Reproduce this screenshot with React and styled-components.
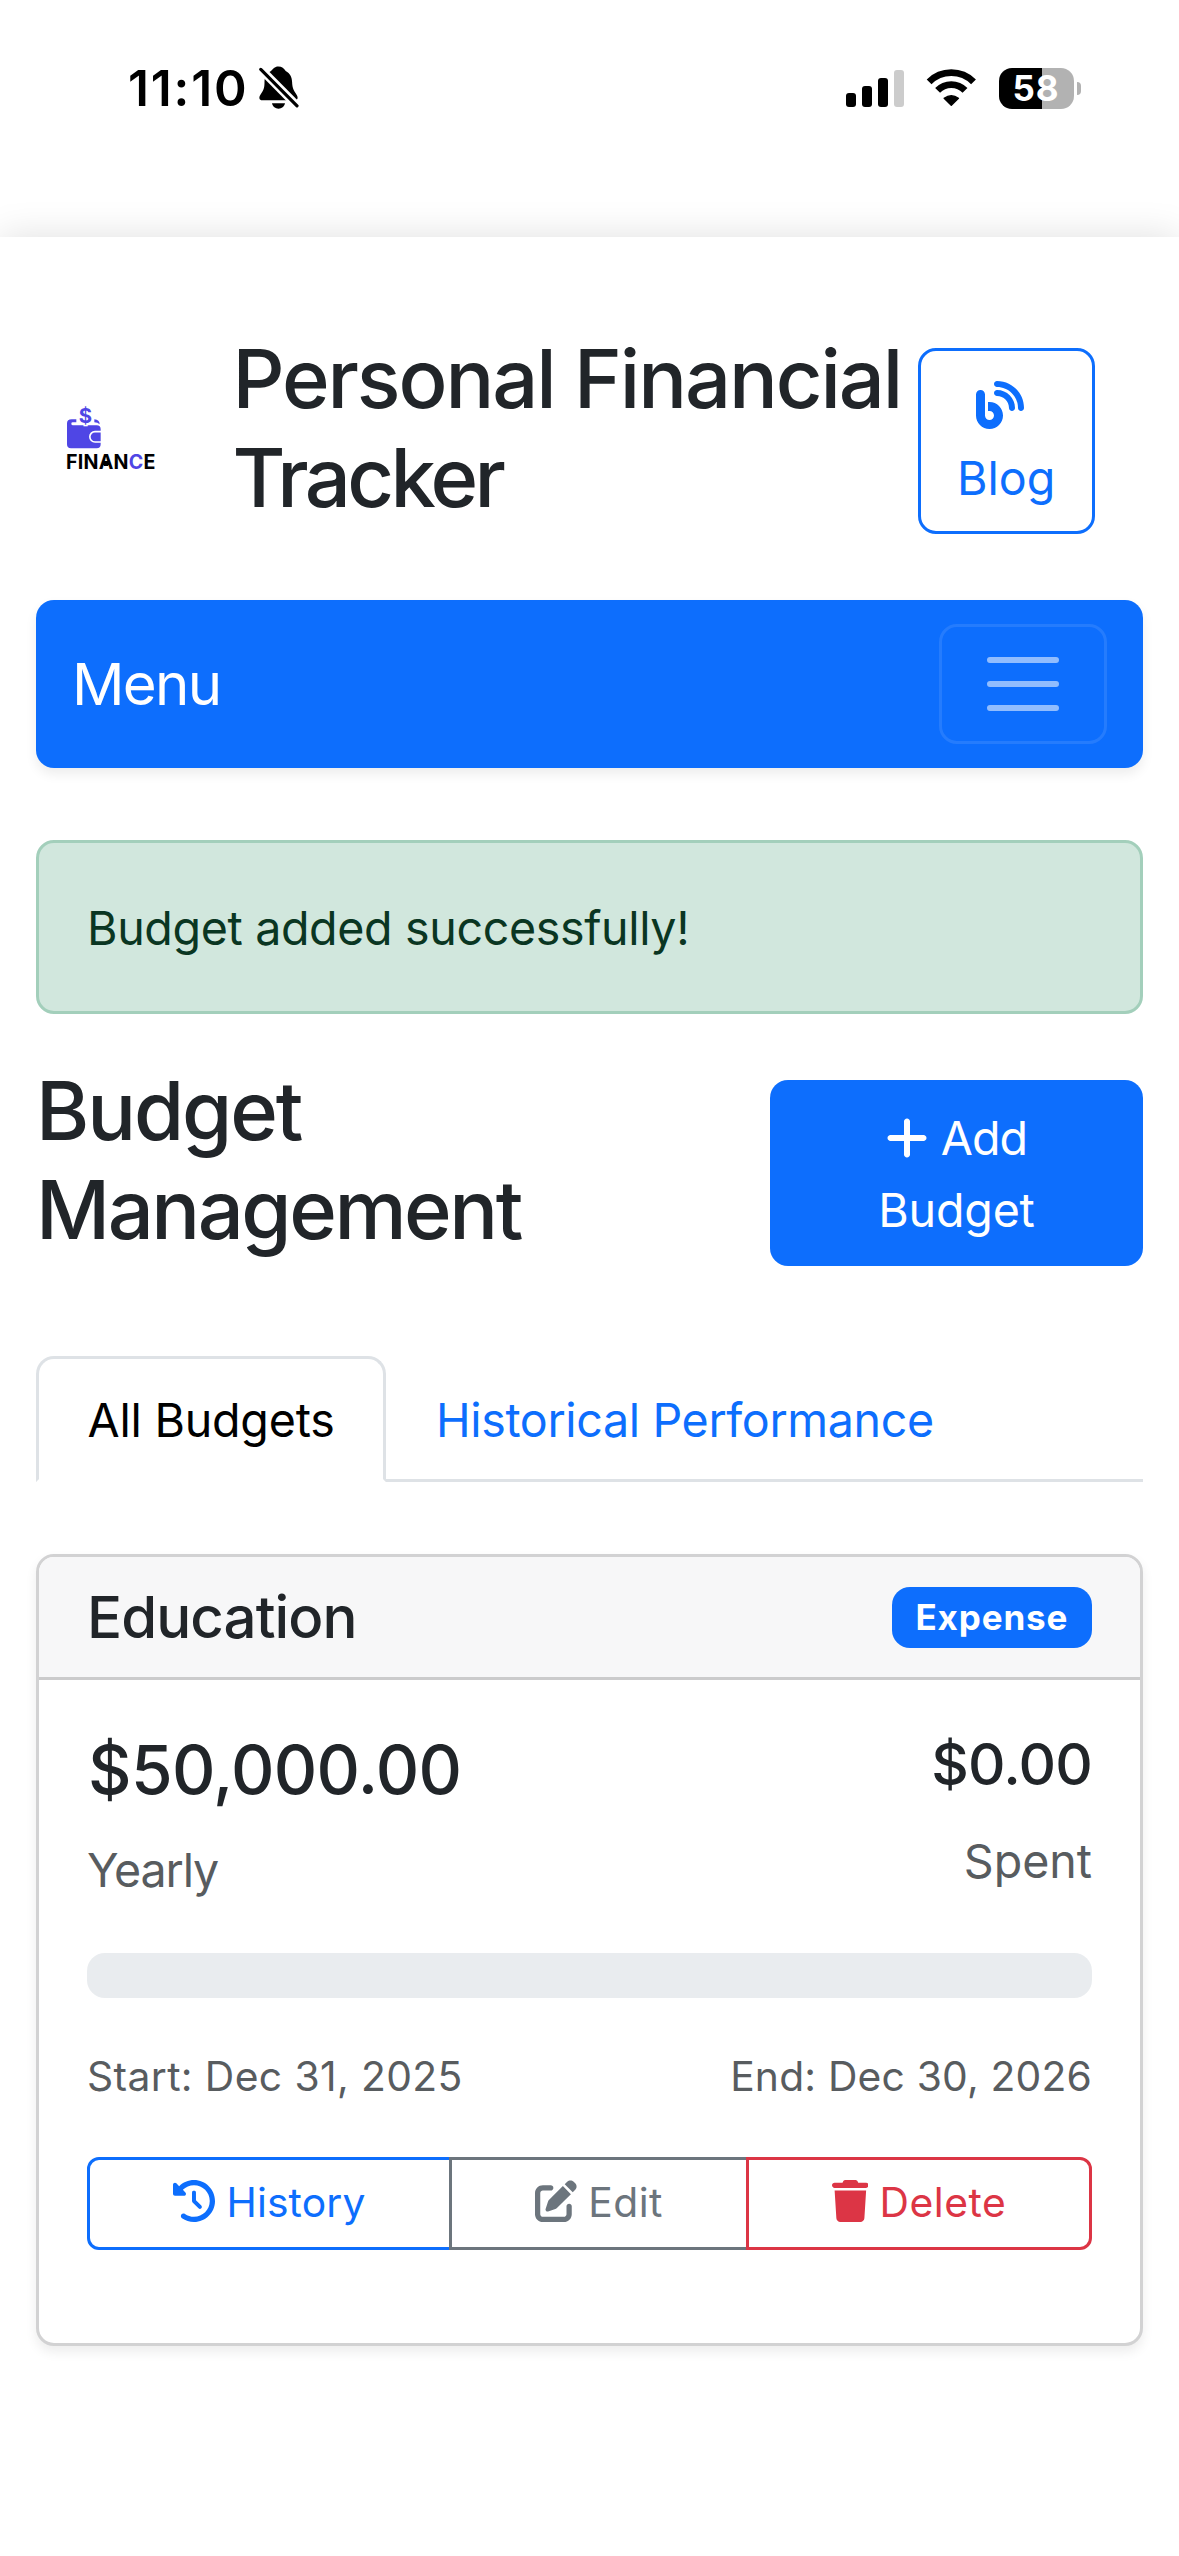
import React from "react";
import styled, { createGlobalStyle } from "styled-components";
import { FaBlog, FaClockRotateLeft, FaPenToSquare, FaPlus, FaTrash } from "react-icons/fa6";

const blue = "#0d6efd";
const ink = "#212529";

const GlobalStyle = createGlobalStyle`
  *, *::before, *::after { box-sizing: border-box; }
  body {
    margin: 0;
    background: #fff;
    color: ${ink};
    font-family: Inter, "Liberation Sans", sans-serif;
    font-size: 46.6px;
    line-height: 72px;
    overflow-x: hidden;
  }
  h1, h2, h3, h5, p { margin: 0; }
  svg { display: block; flex: none; }
`;

const Screen = styled.div`
  width: 1179px;
  height: 2556px;
  display: flex;
  flex-direction: column;
  overflow: hidden;
`;

const Spaced = styled.span`
  letter-spacing: ${(p) => p.$ls}px;
  white-space: nowrap;
`;

/* Status bar */
const StatusBar = styled.div`
  height: 237px;
  flex: none;
  display: flex;
  justify-content: space-between;
  padding: 0 98px 61px 128px;
  color: #000;
`;
const StatusGroup = styled.div`
  display: flex;
  align-items: center;
`;
const Clock = styled.span`
  font-size: 49.5px;
  font-weight: 600;
  letter-spacing: 1.86px;
  width: 130.5px;
`;
const Signal = styled.div`
  display: flex;
  align-items: flex-end;
  gap: 6px;
  height: 37px;
  margin-right: 22px;
`;
const SignalBar = styled.span`
  width: 10px;
  height: ${(p) => p.$h}px;
  border-radius: 3px;
  background: ${(p) => (p.$dim ? "#ccc" : "#000")};
`;
const Battery = styled.div`
  display: flex;
  align-items: center;
  gap: 3px;
  margin-left: 22px;
`;
const BatteryBody = styled.div`
  width: 75px;
  height: 41px;
  border-radius: 13px;
  background: linear-gradient(90deg, #000 43px, #b2b2b2 43px);
  color: #fff;
  font-size: 35px;
  line-height: 41px;
  font-weight: 700;
  letter-spacing: 0.8px;
  padding-left: 13.5px;
`;
const BatteryNub = styled.span`
  width: 4px;
  height: 13px;
  border-radius: 0 6px 6px 0;
  background: #b2b2b2;
`;

/* Page */
const Page = styled.main`
  flex: 1;
  background: #fff;
  box-shadow: 0 0 36px rgba(0, 0, 0, 0.13);
  padding: 92px 36px 0;
`;
const Header = styled.header`
  display: flex;
  align-items: center;
  justify-content: space-between;
  height: 223px;
  padding: 0 48px 0 31px;
  margin-bottom: 48px;
`;
const Logo = styled.div`
  width: 165.5px;
  flex: none;
`;
const LogoName = styled.div`
  font-size: 19.6px;
  line-height: 26px;
  font-weight: 700;
  letter-spacing: 0.25px;
  color: #000;
  margin-left: -1px;
`;
const LogoHeavy = styled.span`
  background: linear-gradient(#000, #000) center 11px / 4px 5px no-repeat;
`;
const LogoAccent = styled.span`
  color: #4f46e5;
`;
const Title = styled.h1`
  flex: 1;
  font-size: 81.2px;
  line-height: 99px;
  font-weight: 500;
  padding-bottom: ${(p) => p.$pb || 26}px;
`;
const BlogButton = styled.a`
  width: 177px;
  height: 186px;
  flex: none;
  border: 3px solid ${blue};
  border-radius: 18px;
  color: ${blue};
  padding: 19px 36px 0;
  svg {
    width: 48px;
    height: 48px;
    margin: 11px 0 13px 18.5px;
  }
`;

const MenuBar = styled.nav`
  height: 168px;
  border-radius: 18px;
  background: ${blue};
  box-shadow: 0 6px 12px rgba(0, 0, 0, 0.075);
  display: flex;
  align-items: center;
  justify-content: space-between;
  padding: 0 36px;
  color: #fff;
  font-size: 58.2px;
`;
const Toggler = styled.button`
  width: 168px;
  height: 120px;
  border: 3px solid rgba(255, 255, 255, 0.1);
  border-radius: 18px;
  background: transparent;
  display: flex;
  align-items: center;
  justify-content: center;
  padding: 0;
`;
const Alert = styled.div`
  margin-top: 72px;
  border: 3px solid #a3cfbb;
  border-radius: 18px;
  background: #d1e7dd;
  color: #0a3622;
  padding: 49px 47px 47px 48px;
`;
const Heading = styled.div`
  display: flex;
  align-items: center;
  height: 222px;
  margin: 48px 0 72px;
`;
const AddButton = styled.button`
  width: 373px;
  height: 186px;
  border: 0;
  border-radius: 18px;
  background: ${blue};
  color: #fff;
  font: inherit;
  padding: 1px 0 0;
  display: flex;
  flex-direction: column;
  align-items: center;
  justify-content: center;
`;
const AddLine = styled.span`
  display: flex;
  align-items: center;
  gap: 13px;
  svg {
    width: 42px;
    height: 48px;
  }
`;

const Tabs = styled.div`
  display: flex;
  height: 126px;
  border-bottom: 3px solid #dee2e6;
`;
const Tab = styled.a`
  height: 126px;
  padding: 25px 48px 0 ${(p) => (p.$active ? 48.5 : 47)}px;
  border: 3px solid transparent;
  color: ${blue};
  ${(p) =>
    p.$active &&
    `
    width: 350px;
    color: #000;
    background: #fff;
    border-color: #dee2e6 #dee2e6 #fff;
    border-radius: 18px 18px 0 0;
  `}
`;

const Card = styled.section`
  margin-top: 72px;
  border: 3px solid #d2d2d3;
  border-radius: 18px;
  box-shadow: 0 6px 12px rgba(0, 0, 0, 0.075);
  background: #fff;
`;
const CardHeader = styled.div`
  height: 123px;
  display: flex;
  align-items: center;
  justify-content: space-between;
  padding: 0 48px;
  background: #f7f7f8;
  border-bottom: 3px solid #cbcbcc;
  border-radius: 15px 15px 0 0;
`;
const CardTitle = styled.h5`
  font-size: 58.2px;
  line-height: 72px;
  font-weight: 500;
`;
const Badge = styled.span`
  width: 200px;
  height: 61px;
  border-radius: 18px;
  background: ${blue};
  color: #fff;
  font-size: 35px;
  line-height: 60px;
  font-weight: 700;
  letter-spacing: 0.86px;
  padding-left: 23.5px;
`;
const CardBody = styled.div`
  padding: 48px 48px 93px;
`;
const Row = styled.div`
  display: flex;
  justify-content: space-between;
`;
const Figure = styled.div`
  text-align: ${(p) => (p.$end ? "right" : "left")};
`;
const Amount = styled.h3`
  font-size: ${(p) => p.$size}px;
  line-height: ${(p) => p.$lh}px;
  font-weight: 500;
  padding: ${(p) => p.$pad || "0"};
  margin-bottom: ${(p) => p.$mb}px;
`;
const Muted = styled.p`
  color: #585c5f;
  padding-top: 1px;
  margin-bottom: -1px;
`;
const Progress = styled.div`
  height: 45px;
  margin: 48px 0 47px;
  border-radius: 18px;
  background: #e9ecef;
`;
const Dates = styled(Row)`
  color: #585c5f;
  font-size: 40.8px;
  line-height: 63px;
  margin-bottom: 49px;
`;
const ButtonGroup = styled.div`
  display: flex;
`;
const ActionButton = styled.button`
  width: ${(p) => p.$w}px;
  height: 93px;
  margin: 0 0 0 ${(p) => (p.$first ? 0 : -3)}px;
  padding: 0 0 2px;
  border: 3px solid ${(p) => p.$color};
  border-radius: ${(p) => p.$radius || "0"};
  background: #fff;
  color: ${(p) => p.$color};
  font: inherit;
  font-size: 40.8px;
  line-height: 63px;
  display: flex;
  align-items: center;
  justify-content: center;
  gap: 11px;
  svg {
    width: ${(p) => p.$icon || 42}px;
    height: 42px;
    margin-top: -3px;
  }
`;

const BellSlash = () => (
  <svg width="40" height="44" viewBox="0 0 40 44">
    <path d="M19.3 .5C15.5 .5 14 3 12 5 7.500 7.500 5.500 11 5.500 16c0 5-.5 7.500-3 11C.8 29.500 .2 31 .4 32.200.7 33.600 1.700 34.200 3.200 34.200H35.500c1.800 0 2.800-.8 3.100-2 .2-1.300-.4-2.700-2.100-5.200-2.400-3.500-3.200-6-3.400-11-.2-5-2-8.500-6.400-11C25 2.500 23 .5 19.300 .5Z" />
    <path d="M13 37.300H26C25.300 40.600 22.600 42.700 19.500 42.700S13.700 40.600 13 37.300Z" />
    <path d="M1.800 3.200 38.300 40" stroke="#fff" strokeWidth="8.400" />
    <path d="M1.800 3.400 38 39.800" stroke="#000" strokeWidth="3.200" strokeLinecap="round" />
  </svg>
);

const Wifi = () => (
  <svg width="51" height="38" viewBox="0 0 51 38" fill="none" stroke="#000">
    <path d="M3.100 12.800A31.400 31.400 0 0 1 47.500 12.800" strokeWidth="6.800" />
    <path d="M11.600 21.400A19 19 0 0 1 39 21.400" strokeWidth="6.800" />
    <path d="M25.300 36.200 18.200 29.300Q25.300 24 32.400 29.300Z" fill="#000" strokeWidth="1.500" strokeLinejoin="round" />
  </svg>
);

const WalletMark = () => (
  <svg width="34" height="42.700" viewBox="83 80 102 128" fill="#4f46e5" overflow="visible">
    <path d="M83 132Q83 120 97 120H111V129H100Q96 129 96 133Q96 138 101 138H172Q184 138 184 150V195Q184 207 172 207H95Q83 207 83 195Z" />
    <path d="M165 120Q181 121 181 135Q175 129 165 129Z" />
    <path d="M187 157H167A15.500 15.500 0 0 0 167 188H187" fill="none" stroke="#fff" strokeWidth="5" />
    <text
      x="138.500"
      y="131"
      textAnchor="middle"
      fontSize="61"
      fontWeight="700"
      fontFamily="Inter, sans-serif"
      stroke="#fff"
      strokeWidth="9"
      paintOrder="stroke"
    >
      $
    </text>
  </svg>
);

const MenuLines = () => (
  <svg width="90" height="90" viewBox="0 0 30 30">
    <path stroke="rgba(255,255,255,.55)" strokeLinecap="round" strokeWidth="2" d="M4 7h22M4 15h22M4 23h22" />
  </svg>
);

export default function App() {
  return (
    <Screen>
      <GlobalStyle />
      <StatusBar>
        <StatusGroup>
          <Clock>11:10</Clock>
          <BellSlash />
        </StatusGroup>
        <StatusGroup>
          <Signal>
            <SignalBar $h={14} />
            <SignalBar $h={21} />
            <SignalBar $h={29} />
            <SignalBar $h={37} $dim />
          </Signal>
          <Wifi />
          <Battery>
            <BatteryBody>58</BatteryBody>
            <BatteryNub />
          </Battery>
        </StatusGroup>
      </StatusBar>

      <Page>
        <Header>
          <Logo>
            <WalletMark />
            <LogoName>
              FIN<LogoHeavy>A</LogoHeavy>N<LogoAccent>C</LogoAccent>E
            </LogoName>
          </Logo>
          <Title>
            <Spaced $ls={-2.1}>Personal Financial</Spaced>
            <br />
            <Spaced $ls={-3.6}>Tracker</Spaced>
          </Title>
          <BlogButton>
            <FaBlog />
            <Spaced $ls={0}>Blog</Spaced>
          </BlogButton>
        </Header>

        <MenuBar>
          <Spaced $ls={-1.7}>Menu</Spaced>
          <Toggler aria-label="Toggle navigation">
            <MenuLines />
          </Toggler>
        </MenuBar>

        <Alert>
          <Spaced $ls={-0.36}>Budget added successfully!</Spaced>
        </Alert>

        <Heading>
          <Title as="h2">
            <Spaced $ls={-2.1}>Budget</Spaced>
            <br />
            <Spaced $ls={-2.45}>Management</Spaced>
          </Title>
          <AddButton>
            <AddLine>
              <FaPlus />
              <Spaced $ls={-0.9}>Add</Spaced>
            </AddLine>
            <Spaced $ls={-0.2}>Budget</Spaced>
          </AddButton>
        </Heading>

        <Tabs>
          <Tab $active>
            <Spaced $ls={-0.22}>All Budgets</Spaced>
          </Tab>
          <Tab>
            <Spaced $ls={-0.36}>Historical Performance</Spaced>
          </Tab>
        </Tabs>

        <Card>
          <CardHeader>
            <CardTitle>
              <Spaced $ls={-0.92}>Education</Spaced>
            </CardTitle>
            <Badge>Expense</Badge>
          </CardHeader>
          <CardBody>
            <Row>
              <Figure>
                <Amount $size={67.4} $lh={81} $mb={23} $pad="1px 0 0 1px">
                  <Spaced $ls={-0.65}>$50,000.00</Spaced>
                </Amount>
                <Muted>
                  <Spaced $ls={-1.1}>Yearly</Spaced>
                </Muted>
              </Figure>
              <Figure $end>
                <Amount $size={58.2} $lh={72} $mb={24}>
                  <Spaced $ls={-0.8}>$0.00</Spaced>
                </Amount>
                <Muted>
                  <Spaced $ls={-0.03}>Spent</Spaced>
                </Muted>
              </Figure>
            </Row>
            <Progress />
            <Dates>
              <Spaced $ls={0.38}>Start: Dec 31, 2025</Spaced>
              <Spaced $ls={0.18}>End: Dec 30, 2026</Spaced>
            </Dates>
            <ButtonGroup>
              <ActionButton $first $w={365} $color={blue} $radius="12px 0 0 12px">
                <FaClockRotateLeft />
                <Spaced $ls={0.14}>History</Spaced>
              </ActionButton>
              <ActionButton $w={300} $color="#6c757d">
                <FaPenToSquare />
                <Spaced $ls={0.5}>Edit</Spaced>
              </ActionButton>
              <ActionButton $w={346} $color="#dc3545" $icon={36.75} $radius="0 12px 12px 0">
                <FaTrash />
                <Spaced $ls={0.53}>Delete</Spaced>
              </ActionButton>
            </ButtonGroup>
          </CardBody>
        </Card>
      </Page>
    </Screen>
  );
}
